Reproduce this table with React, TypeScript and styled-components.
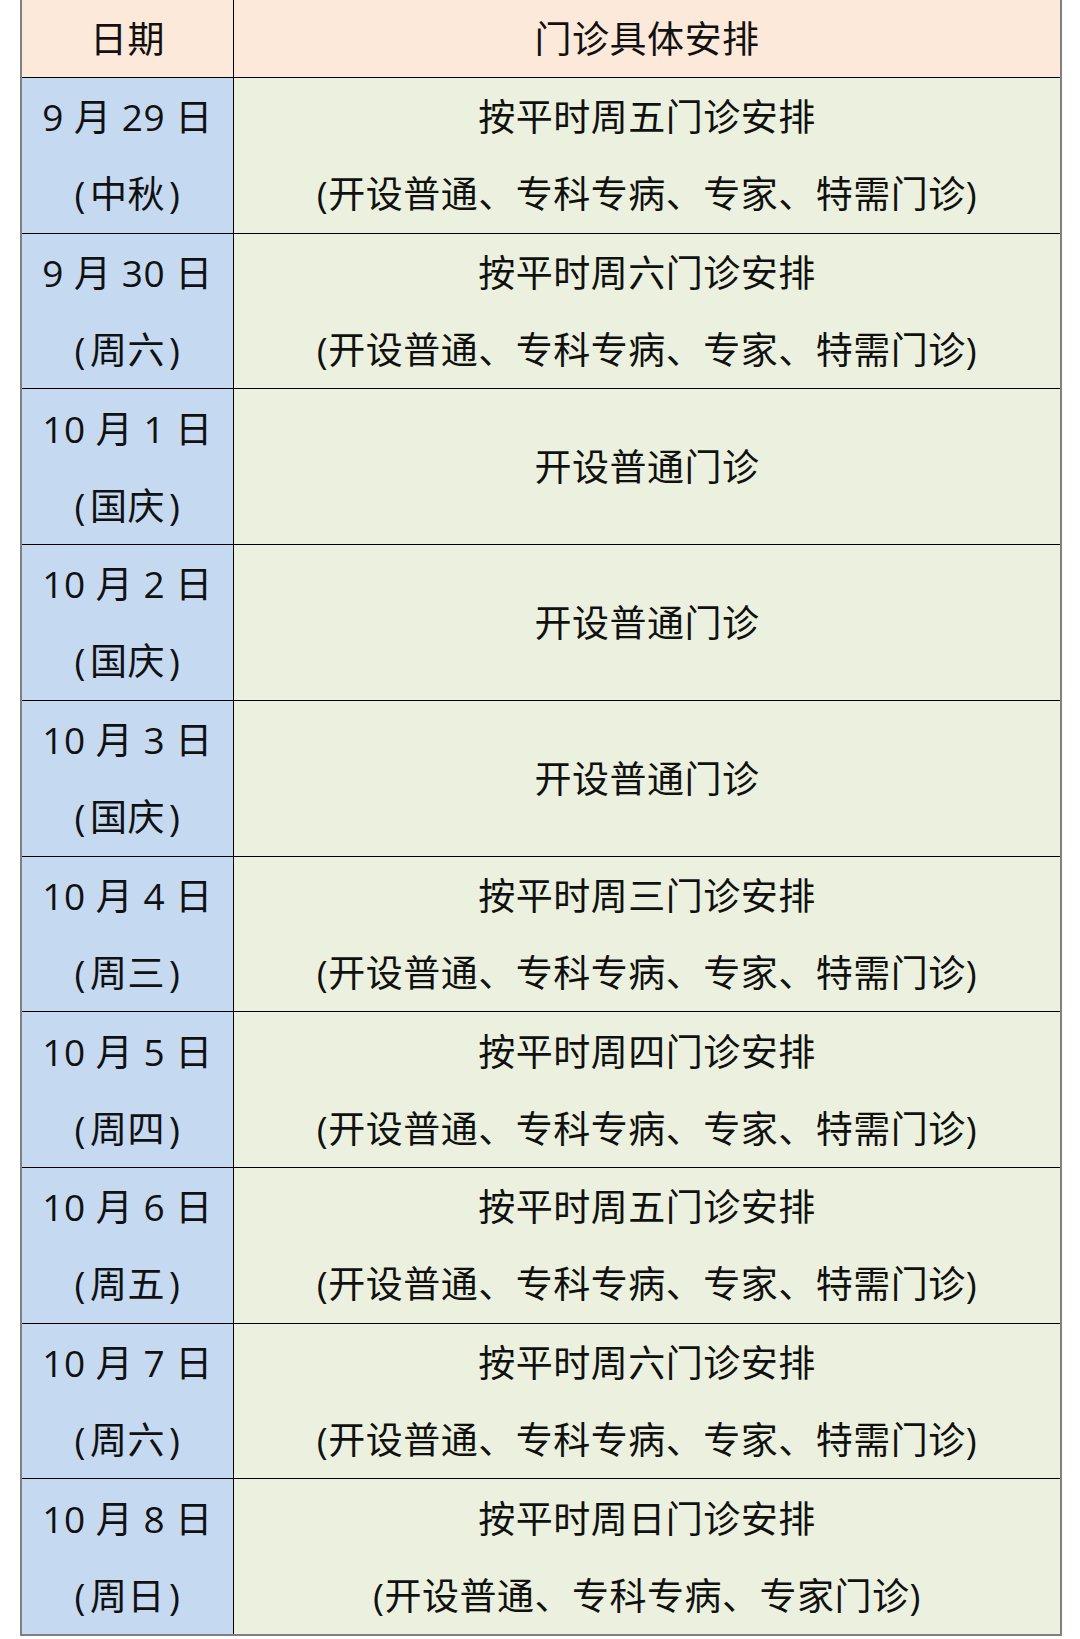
import styled, { createGlobalStyle } from "styled-components";

const colors = {
  header: "#FDE9D9",
  date: "#C5D9F1",
  content: "#EBF1DE",
  text: "#111111",
  grid: "#000000",
  frame: "#808080",
};

const GlobalStyle = createGlobalStyle`
  html, body {
    margin: 0;
    padding: 0;
    background: #ffffff;
  }
  body {
    font-family: "Open Sans", "Noto Sans CJK SC", sans-serif;
    color: ${colors.text};
  }
`;

const Page = styled.div`
  width: 1080px;
  height: 1639px;
  padding-left: 20px;
  box-sizing: border-box;
`;

const Table = styled.div`
  width: 1042px;
  height: 1636px;
  display: flex;
  flex-direction: column;
  border-left: 2px solid ${colors.frame};
  border-right: 2px solid ${colors.frame};
  border-bottom: 2px solid ${colors.frame};
  box-sizing: border-box;
`;

const Row = styled.div<{ $head?: boolean }>`
  display: grid;
  grid-template-columns: 212px 1fr;
  flex: ${(p) => (p.$head ? "0 0 77px" : "1 1 0")};
  border-bottom: 1px solid ${colors.grid};
  box-sizing: border-box;

  &:last-child {
    border-bottom: none;
  }
`;

const Cell = styled.div<{ $bg: string; $divider?: boolean }>`
  background: ${(p) => p.$bg};
  border-right: ${(p) => (p.$divider ? `1px solid ${colors.grid}` : "none")};
  display: flex;
  flex-direction: column;
  align-items: center;
  justify-content: center;
  font-size: 37px;
  line-height: 77px;
  letter-spacing: 0.5px;
  white-space: pre;
  box-sizing: border-box;
`;

const Line = styled.div``;

const Paren = styled.span`
  margin: 0 4px;
`;

type Entry = { date: string; day: string; plan: string; note?: string };

const full = "(开设普通、专科专病、专家、特需门诊)";

const rows: Entry[] = [
  { date: "9 月 29 日", day: "中秋", plan: "按平时周五门诊安排", note: full },
  { date: "9 月 30 日", day: "周六", plan: "按平时周六门诊安排", note: full },
  { date: "10 月 1 日", day: "国庆", plan: "开设普通门诊" },
  { date: "10 月 2 日", day: "国庆", plan: "开设普通门诊" },
  { date: "10 月 3 日", day: "国庆", plan: "开设普通门诊" },
  { date: "10 月 4 日", day: "周三", plan: "按平时周三门诊安排", note: full },
  { date: "10 月 5 日", day: "周四", plan: "按平时周四门诊安排", note: full },
  { date: "10 月 6 日", day: "周五", plan: "按平时周五门诊安排", note: full },
  { date: "10 月 7 日", day: "周六", plan: "按平时周六门诊安排", note: full },
  { date: "10 月 8 日", day: "周日", plan: "按平时周日门诊安排", note: "(开设普通、专科专病、专家门诊)" },
];

export default function App() {
  return (
    <>
      <GlobalStyle />
      <Page>
        <Table>
          <Row $head>
            <Cell $bg={colors.header} $divider>
              日期
            </Cell>
            <Cell $bg={colors.header}>门诊具体安排</Cell>
          </Row>
          {rows.map((r) => (
            <Row key={r.date}>
              <Cell $bg={colors.date} $divider>
                <Line>{r.date}</Line>
                <Line>
                  <Paren>(</Paren>
                  {r.day}
                  <Paren>)</Paren>
                </Line>
              </Cell>
              <Cell $bg={colors.content}>
                <Line>{r.plan}</Line>
                {r.note && <Line>{r.note}</Line>}
              </Cell>
            </Row>
          ))}
        </Table>
      </Page>
    </>
  );
}
